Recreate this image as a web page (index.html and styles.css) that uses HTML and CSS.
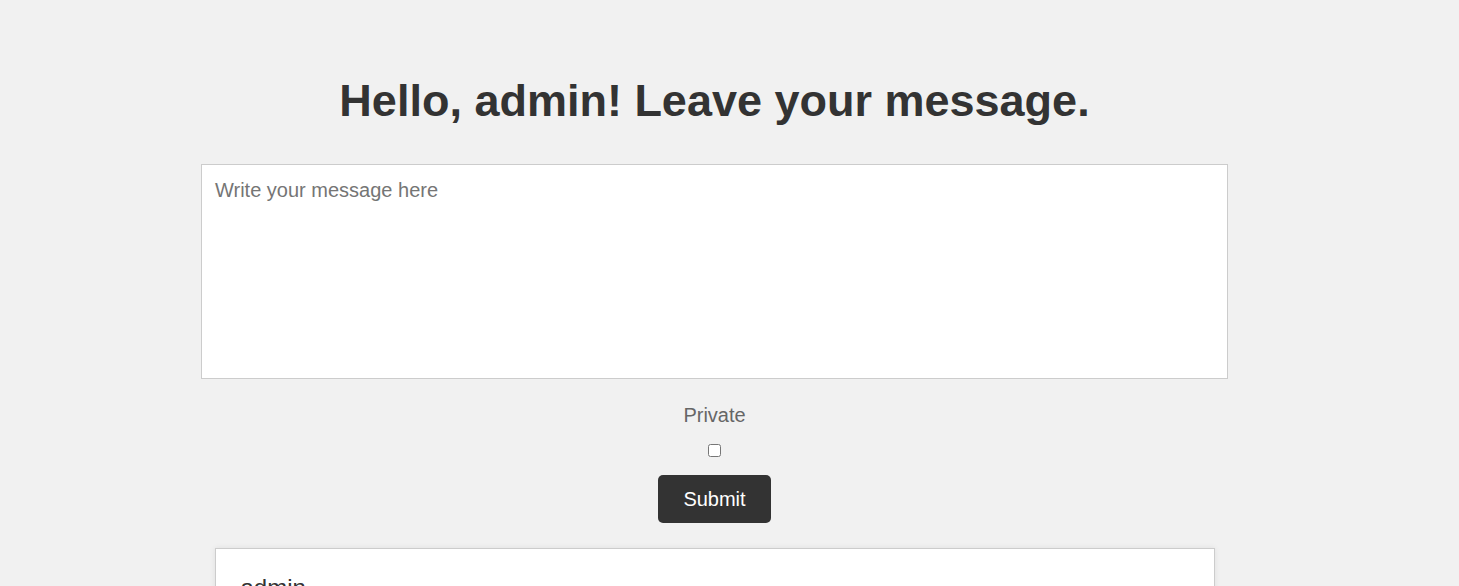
FILE: index.html
```html
<!DOCTYPE html>
<html lang="en">
<head>
    <meta charset="UTF-8">
    <meta name="viewport" content="width=device-width, initial-scale=1.0">
    <title>Message Board</title>
    <link rel="stylesheet" href="styles.css">
</head>
<body>
    <div class="page">
        <h1>Hello, admin! Leave your message.</h1>
        <form class="message-form">
            <textarea name="message" placeholder="Write your message here"></textarea>
            <label for="private" class="private-label">Private</label>
            <input type="checkbox" id="private" name="private" class="private-check">
            <button type="submit" class="submit-btn">Submit</button>
        </form>
        <div class="messages">
            <div class="message">
                <p class="message-author">admin</p>
                <p class="message-text">Welcome to the message board.</p>
            </div>
        </div>
    </div>
</body>
</html>
```

FILE: styles.css
```css
body {
    font-family: "Liberation Sans", Arial, sans-serif;
    background-color: #f1f1f1;
    margin: 0;
    padding: 0;
}
.page {
    width: 1027px;
    margin-left: 201px;
    padding-top: 73px;
}
h1 {
    text-align: center;
    color: #333;
    font-size: 45px;
    margin: 0 0 35px;
    line-height: 56px;
}
.message-form {
    display: flex;
    flex-direction: column;
    align-items: center;
}
textarea {
    box-sizing: border-box;
    width: 1027px;
    height: 215px;
    padding: 14px 13px 12px;
    border: 1px solid #ccc;
    font-family: "Liberation Sans", Arial, sans-serif;
    font-size: 20px;
    resize: none;
    background-color: #fff;
}
textarea::placeholder {
    color: #757575;
}
.private-label {
    color: #666;
    font-size: 20px;
    margin-top: 25px;
}
.private-check {
    margin: 17px 0 18px;
    width: 13px;
    height: 13px;
}
.submit-btn {
    background-color: #333;
    color: #fff;
    border: none;
    padding: 13px 25px 12px;
    border-radius: 5px;
    font-family: "Liberation Sans", Arial, sans-serif;
    font-size: 20px;
    cursor: pointer;
}
.messages {
    width: 1000px;
    margin: 25px auto 0;
}
.message {
    background-color: #fff;
    border: 1px solid #ccc;
    box-shadow: 0 0 6px rgba(0, 0, 0, 0.08);
    padding: 25px;
    margin-bottom: 20px;
}
.message-author {
    margin: 0 0 10px;
    font-size: 24px;
    color: #333;
}
.message-text {
    margin: 0;
    font-size: 18px;
    color: #555;
}
```
